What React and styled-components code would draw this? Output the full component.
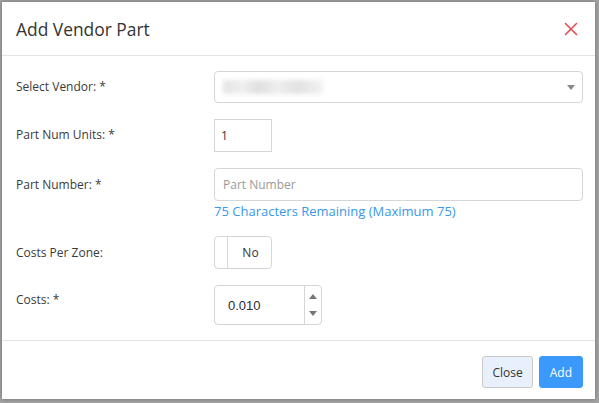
import styled, { createGlobalStyle } from "styled-components"

const Global = createGlobalStyle`
    html, body {
        margin: 0;
        padding: 0;
        background: #a3a3a3;
    }
    * { box-sizing: border-box; }
`;

const Backdrop = styled.div`
    width: 599px;
    height: 403px;
    padding: 2px 4px 4px 2px;
    display: flex;
`;

const Modal = styled.div`
    flex: 1;
    background: #fff;
    display: flex;
    flex-direction: column;
    box-shadow: 0 0 4px rgba(0, 0, 0, 0.35);
    font-family: "Open Sans", "Noto Sans", sans-serif;
    color: #333;
`;

const Header = styled.div`
    height: 54px;
    display: flex;
    align-items: center;
    justify-content: space-between;
    padding: 0 17px 0 14px;
    border-bottom: 1px solid #e3e3e3;
`;

const Title = styled.h4`
    margin: 0;
    font-size: 17.4px;
    font-weight: 400;
    color: #333;
`;

const CloseX = styled.button`
    border: 0;
    background: none;
    padding: 0;
    width: 14px;
    height: 14px;
    display: flex;
    cursor: pointer;
`;

const Body = styled.div`
    padding: 15px 12px 15px 14px;
    display: flex;
    flex-direction: column;
    gap: 16px;
    border-bottom: 1px solid #e3e3e3;
`;

const Row = styled.div`
    display: grid;
    grid-template-columns: 198px 1fr;
    align-items: start;
`;

const Label = styled.label`
    font-size: 12px;
    line-height: ${(p) => p.$h || 32}px;
    color: #3a3a3a;
`;

const Field = styled.div`
    display: flex;
    flex-direction: column;
`;

const Box = styled.div`
    position: relative;
    width: ${(p) => p.$w || "100%"};
    height: ${(p) => p.$h || 33}px;
    border: 1px solid #d6d6d6;
    border-radius: ${(p) => (p.$square ? 0 : 4)}px;
    background: #fff;
    display: flex;
    align-items: center;
    font-size: 12px;
    color: #333;
    padding-left: ${(p) => p.$pad || 8}px;
    overflow: hidden;
`;

const Placeholder = styled.span`
    color: #9a9a9a;
`;

const Blurred = styled.div`
    width: 100px;
    height: 14px;
    background: linear-gradient(90deg, #e4e4e4 0%, #efefef 20%, #e0e0e0 35%, #eeeeee 55%, #e2e2e2 75%, #f2f2f2 100%);
    filter: blur(2px);
`;

const Caret = styled.span`
    position: absolute;
    right: 7px;
    top: 13px;
    width: 0;
    height: 0;
    border-left: 4px solid transparent;
    border-right: 4px solid transparent;
    border-top: 5px solid #888;
`;

const Helper = styled.div`
    margin-top: 1px;
    font-size: 13px;
    line-height: 18px;
    color: #3a97e8;
`;

const Toggle = styled.div`
    width: 58px;
    height: 33px;
    border: 1px solid #d6d6d6;
    border-radius: 4px;
    display: flex;
    font-size: 12px;
`;

const Handle = styled.div`
    width: 13px;
    border-right: 1px solid #d6d6d6;
`;

const ToggleText = styled.div`
    flex: 1;
    display: flex;
    align-items: center;
    justify-content: center;
    padding-left: 2px;
`;

const NumberText = styled.span`
    font-family: "Liberation Sans", Arial, sans-serif;
    font-size: 13px;
    color: #2b2b3b;
    padding-left: 5px;
`;

const Spinner = styled.div`
    position: absolute;
    right: 0;
    top: 0;
    bottom: 0;
    width: 17px;
    border-left: 1px solid #d6d6d6;
    display: flex;
    flex-direction: column;
    align-items: center;
    justify-content: space-between;
    padding: 8px 0 8px;
`;

const Arrow = styled.span`
    width: 0;
    height: 0;
    border-left: 4px solid transparent;
    border-right: 4px solid transparent;
    ${(p) => (p.$up ? "border-bottom: 5px solid #777;" : "border-top: 5px solid #777;")}
`;

const Footer = styled.div`
    flex: 1;
    display: flex;
    justify-content: flex-end;
    align-items: flex-start;
    gap: 6px;
    padding: 15px 12px 0 0;
`;

const Btn = styled.button`
    height: 32px;
    padding: 0 ${(p) => (p.$primary ? 10 : 9)}px;
    font-family: "Open Sans", "Noto Sans", sans-serif;
    font-size: 12px;
    border-radius: 3px;
    cursor: pointer;
    color: ${(p) => (p.$primary ? "#fff" : "#333")};
    background: ${(p) => (p.$primary ? "#3b99fc" : "#e8f1fb")};
    border: 1px solid ${(p) => (p.$primary ? "#3b99fc" : "#c9c9c9")};
`;

export default function App() {
    return (
        <>
            <Global />
            <Backdrop>
                <Modal>
                    <Header>
                        <Title>Add Vendor Part</Title>
                        <CloseX aria-label="Close">
                            <svg width="14" height="14" viewBox="0 0 14 14">
                                <path d="M1.5 1.5 L12.5 12.5 M12.5 1.5 L1.5 12.5" stroke="#e0474c" strokeWidth="1.5" strokeLinecap="round" />
                            </svg>
                        </CloseX>
                    </Header>
                    <Body>
                        <Row>
                            <Label>Select Vendor: *</Label>
                            <Box $h={32}>
                                <Blurred />
                                <Caret />
                            </Box>
                        </Row>
                        <Row>
                            <Label $h={31}>Part Num Units: *</Label>
                            <Box $w="58px" $square $pad={6}>1</Box>
                        </Row>
                        <Row>
                            <Label $h={33}>Part Number: *</Label>
                            <Field>
                                <Box>
                                    <Placeholder>Part Number</Placeholder>
                                </Box>
                                <Helper>75 Characters Remaining (Maximum 75)</Helper>
                            </Field>
                        </Row>
                        <Row>
                            <Label $h={33}>Costs Per Zone:</Label>
                            <Toggle>
                                <Handle />
                                <ToggleText>No</ToggleText>
                            </Toggle>
                        </Row>
                        <Row>
                            <Label $h={30}>Costs: *</Label>
                            <Box $w="108px" $h={40} $pad={8}>
                                <NumberText>0.010</NumberText>
                                <Spinner>
                                    <Arrow $up />
                                    <Arrow />
                                </Spinner>
                            </Box>
                        </Row>
                    </Body>
                    <Footer>
                        <Btn>Close</Btn>
                        <Btn $primary>Add</Btn>
                    </Footer>
                </Modal>
            </Backdrop>
        </>
    )
}
